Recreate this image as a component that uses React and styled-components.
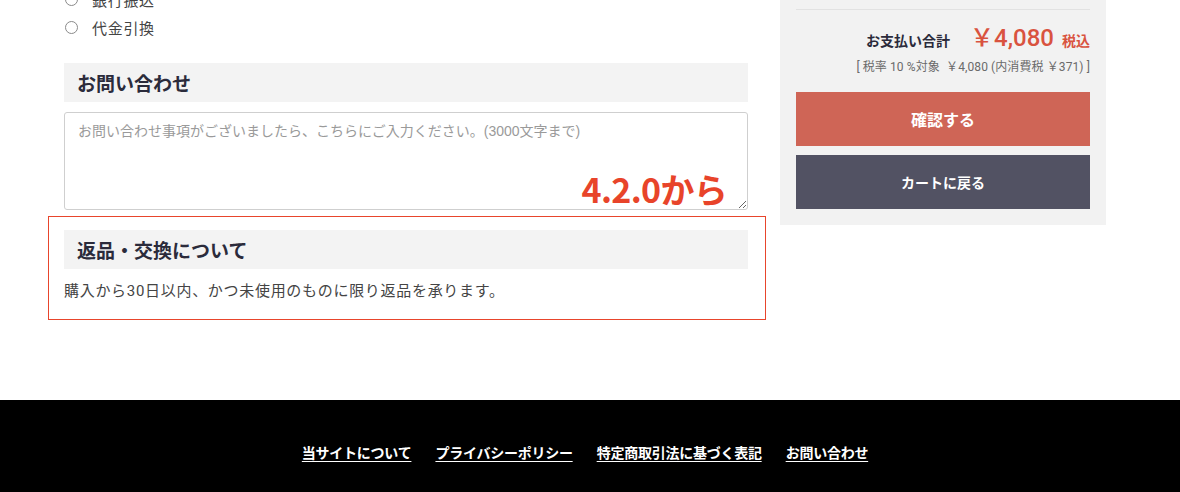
import React from "react";
import styled, { createGlobalStyle } from "styled-components";

const Global = createGlobalStyle`
  html, body { margin: 0; padding: 0; background: #fff; }
  body {
    font-family: "Roboto", "Noto Sans CJK JP", sans-serif;
    color: #444;
    -webkit-font-smoothing: antialiased;
  }
  * { box-sizing: border-box; }
`;

const Page = styled.div`
  width: 1180px;
  overflow: hidden;
`;

const Main = styled.main`
  height: 400px;
  display: flex;
  align-items: flex-start;
  gap: 14px;
  padding-left: 48px;
  overflow: hidden;
`;

const LeftCol = styled.div`
  width: 718px;
  margin-top: -15px;
  display: flex;
  flex-direction: column;
`;

const Block = styled.div`
  padding: 0 18px 0 16px;
  margin-top: ${(p) => p.$mt || 0}px;
`;

const RadioList = styled.ul`
  list-style: none;
  margin: 0;
  padding: 0 16px;
`;

const RadioItem = styled.li`
  height: 28px;
  display: flex;
  align-items: center;
  font-size: 15px;
  letter-spacing: 0.7px;
  color: #444;
`;

const RadioCircle = styled.span`
  width: 13px;
  height: 13px;
  border: 1px solid #8a8a8a;
  border-radius: 50%;
  margin: 0 14px 0 1px;
  background: #fff;
  flex: none;
`;

const Heading = styled.h2`
  margin: 0;
  height: 39px;
  display: flex;
  align-items: center;
  padding: 0 13px;
  background: #f3f3f3;
  font-size: 19px;
  font-weight: 700;
  color: #2b2b3b;
  font-family: "Noto Sans CJK JP", sans-serif;
`;

const FieldWrap = styled.div`
  position: relative;
`;

const TextArea = styled.textarea`
  display: block;
  width: 100%;
  height: 98px;
  border: 1px solid #cfcfcf;
  border-radius: 3px;
  padding: 8px 13px;
  font-family: "Liberation Sans", "Noto Sans CJK JP", sans-serif;
  font-size: 14px;
  line-height: 20px;
  color: #444;
  resize: vertical;
  &::placeholder { color: #9a9a9a; }
`;

const Annotation = styled.span`
  position: absolute;
  right: 21px;
  bottom: 1px;
  font-family: "Noto Sans CJK JP", sans-serif;
  font-weight: 700;
  font-size: 34px;
  line-height: 40px;
  letter-spacing: -0.7px;
  color: #e8442a;
  pointer-events: none;
`;

const Highlight = styled.section`
  margin-top: 6px;
  border: 1px solid #e8452c;
  padding: 13px 17px 16px 15px;
`;

const BodyText = styled.p`
  margin: 10px 0 0;
  font-size: 15px;
  line-height: 24px;
  letter-spacing: 0.7px;
  color: #444;
`;

const Side = styled.aside`
  width: 326px;
  background: #f2f2f2;
  padding: 9px 16px 16px;
`;

const Rule = styled.hr`
  margin: 0;
  border: 0;
  border-top: 1px solid #e2e2e2;
`;

const TotalRow = styled.div`
  margin-top: 10px;
  height: 36px;
  display: flex;
  justify-content: flex-end;
  align-items: baseline;
`;

const TotalLabel = styled.span`
  font-size: 14px;
  font-weight: 700;
  color: #2b2b3b;
  font-family: "Noto Sans CJK JP", sans-serif;
`;

const Price = styled.span`
  margin-left: 20px;
  font-size: 24px;
  font-weight: 500;
  line-height: 36px;
  color: #d9533f;
`;

const TaxIn = styled.span`
  margin-left: 8px;
  font-size: 14px;
  font-weight: 700;
  color: #d9533f;
  font-family: "Noto Sans CJK JP", sans-serif;
`;

const TaxNote = styled.div`
  margin-top: 2px;
  text-align: right;
  font-size: 12px;
  line-height: 18px;
  color: #6a6a6a;
  letter-spacing: 0.1px;
  white-space: pre;
`;

const Buttons = styled.div`
  margin-top: 16px;
  display: flex;
  flex-direction: column;
  gap: 9px;
`;

const Button = styled.button`
  height: 54px;
  width: 100%;
  border: 0;
  background: ${(p) => (p.$primary ? "#cf6556" : "#525263")};
  color: #fff;
  font-family: "Noto Sans CJK JP", sans-serif;
  font-weight: 700;
  font-size: ${(p) => (p.$primary ? 16 : 14)}px;
  cursor: pointer;
`;

const Footer = styled.footer`
  height: 92px;
  background: #000;
  display: flex;
  justify-content: center;
  padding-top: 41px;
`;

const FooterNav = styled.nav`
  display: flex;
  gap: 24px;
  height: 22px;
  margin-left: -10px;
`;

const FooterLink = styled.a`
  color: #fff;
  font-size: 14px;
  font-weight: 700;
  line-height: 22px;
  text-decoration: underline;
  text-underline-offset: 3px;
  font-family: "Noto Sans CJK JP", sans-serif;
  letter-spacing: -0.25px;
`;

export default function App() {
  return (
    <Page>
      <Global />
      <Main>
        <LeftCol>
          <RadioList>
            <RadioItem>
              <RadioCircle />
              銀行振込
            </RadioItem>
            <RadioItem>
              <RadioCircle />
              代金引換
            </RadioItem>
          </RadioList>
          <Block $mt={22}>
            <Heading>お問い合わせ</Heading>
          </Block>
          <Block $mt={10}>
            <FieldWrap>
              <TextArea placeholder="お問い合わせ事項がございましたら、こちらにご入力ください。(3000文字まで)" />
              <Annotation>4.2.0から</Annotation>
            </FieldWrap>
          </Block>
          <Highlight>
            <Heading>返品・交換について</Heading>
            <BodyText>購入から30日以内、かつ未使用のものに限り返品を承ります。</BodyText>
          </Highlight>
        </LeftCol>
        <Side>
          <Rule />
          <TotalRow>
            <TotalLabel>お支払い合計</TotalLabel>
            <Price>￥4,080</Price>
            <TaxIn>税込</TaxIn>
          </TotalRow>
          <TaxNote>{"[ 税率 10 %対象  ￥4,080 (内消費税 ￥371) ]"}</TaxNote>
          <Buttons>
            <Button $primary>確認する</Button>
            <Button>カートに戻る</Button>
          </Buttons>
        </Side>
      </Main>
      <Footer>
        <FooterNav>
          <FooterLink href="#">当サイトについて</FooterLink>
          <FooterLink href="#">プライバシーポリシー</FooterLink>
          <FooterLink href="#">特定商取引法に基づく表記</FooterLink>
          <FooterLink href="#">お問い合わせ</FooterLink>
        </FooterNav>
      </Footer>
    </Page>
  );
}
